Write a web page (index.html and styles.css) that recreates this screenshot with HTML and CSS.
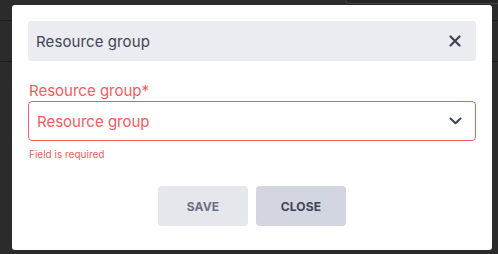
FILE: index.html
```html
<!DOCTYPE html>
<html>
<head>
<meta charset="utf-8">
<link rel="stylesheet" href="styles.css">
</head>
<body>
<div class="backdrop">
  <div class="bg-line bg-line-a"></div>
  <div class="bg-line bg-line-b"></div>
  <div class="bg-tab"></div>
  <div class="modal">
    <div class="modal-header">
      <span class="modal-title">Resource group</span>
      <svg class="close-icon" width="12" height="12" viewBox="0 0 12 12"><path d="M1.5 1.5L10.5 10.5M10.5 1.5L1.5 10.5" stroke="#3f4454" stroke-width="2.2" stroke-linecap="round"/></svg>
    </div>
    <div class="field">
      <label class="field-label">Resource group*</label>
      <div class="select">
        <span class="select-placeholder">Resource group</span>
        <svg class="chevron" width="13" height="8" viewBox="0 0 13 8"><path d="M1.5 1.5L6.5 6.2L11.5 1.5" fill="none" stroke="#3f4454" stroke-width="2" stroke-linecap="round" stroke-linejoin="round"/></svg>
      </div>
      <div class="field-error">Field is required</div>
    </div>
    <div class="actions">
      <button class="btn btn-save">SAVE</button>
      <button class="btn btn-close">CLOSE</button>
    </div>
  </div>
</div>
</body>
</html>
```
FILE: styles.css
```css
html, body {
  margin: 0;
  padding: 0;
  background: #2b2b2b;
}
body {
  font-family: "Inter", "Noto Sans", sans-serif;
  width: 498px;
  height: 254px;
  overflow: hidden;
}
.backdrop {
  position: relative;
  width: 498px;
  height: 254px;
  padding-top: 5px;
  box-sizing: border-box;
}
.bg-line {
  position: absolute;
  left: 0;
  right: 0;
  height: 1px;
  background: #1c1c1c;
}
.bg-line-a { top: 20px; }
.bg-line-b { top: 61px; }
.bg-tab {
  position: absolute;
  left: 345px;
  top: -8px;
  width: 160px;
  height: 10px;
  border: 1px solid #444;
  border-radius: 4px;
  background: #262626;
}
.modal {
  position: relative;
  margin-left: 12px;
  width: 480px;
  height: 245px;
  background: #fff;
  border-radius: 3px;
  padding: 16px 16px 0 16px;
  box-sizing: border-box;
}
.modal-header {
  height: 40px;
  background: #ebecf1;
  border-radius: 4px;
  display: flex;
  align-items: center;
  justify-content: space-between;
  padding: 0 15px 0 8px;
}
.modal-title {
  font-size: 15px;
  color: #3f4454;
  letter-spacing: 0.1px;
}
.close-icon { display: block; }
.field {
  margin-top: 20px;
}
.field-label {
  display: block;
  font-size: 15px;
  line-height: 20px;
  color: #f25c5c;
  padding-left: 1px;
}
.select {
  margin-top: 0;
  height: 40px;
  border: 1px solid #f25c5c;
  border-radius: 4px;
  box-sizing: border-box;
  display: flex;
  align-items: center;
  justify-content: space-between;
  padding: 0 13px 0 8px;
}
.select-placeholder {
  font-size: 15px;
  color: #f25c5c;
}
.chevron { display: block; }
.field-error {
  font-size: 10px;
  line-height: 12px;
  color: #f25c5c;
  margin-top: 7px;
  padding-left: 1px;
}
.actions {
  display: flex;
  justify-content: center;
  gap: 8px;
  margin-top: 26px;
}
.btn {
  width: 90px;
  height: 40px;
  border: none;
  border-radius: 4px;
  font-family: "Inter", "Noto Sans", sans-serif;
  font-size: 12px;
  font-weight: 700;
  letter-spacing: 0.2px;
}
.btn-save {
  background: #e6e7ec;
  color: #6b7084;
}
.btn-close {
  background: #d3d6e0;
  color: #3f4454;
}
```
